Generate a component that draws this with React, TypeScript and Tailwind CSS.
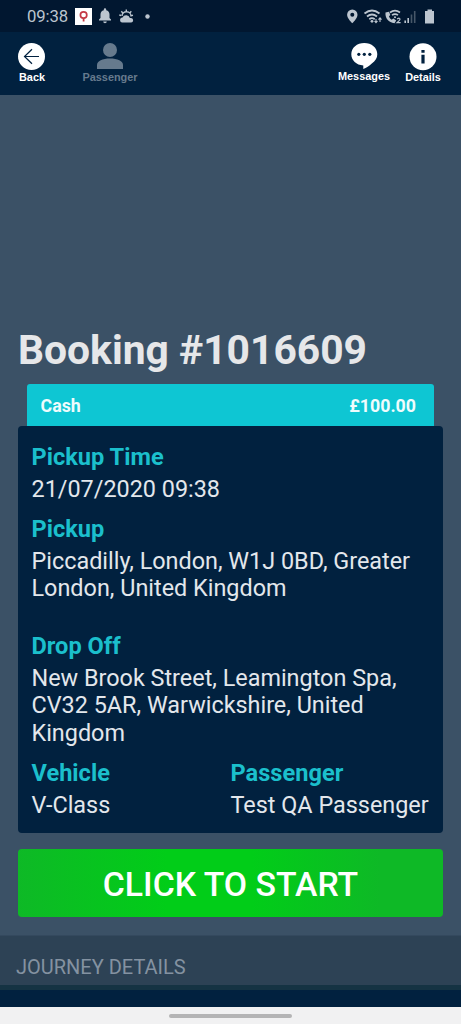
import React from "react";

function Field({ label, children, className = "" }: { label: string; children: React.ReactNode; className?: string }) {
  return (
    <div className={className}>
      <div className="h-[34px] text-[23.6px] font-bold leading-[30px] text-[#1bbfcc]">{label}</div>
      <div className="text-[23.4px] leading-[27.4px] text-[#e3e7ec]">{children}</div>
    </div>
  );
}

function StatusBar() {
  return (
    <div className="flex h-[32px] items-center bg-[#011730] pl-[27px] pr-[25px] text-[#bcc5cf]">
      <span className="w-[42px] whitespace-nowrap pt-[2px] text-[16.700px] leading-[32px] tracking-[-0.1px]">09:38</span>
      <svg className="ml-[6px]" width="80" height="24" viewBox="75 4 80 24" fill="#bcc5cf">
        <path d="M75 8h17v17H75z" fill="#fff" />
        <circle cx="83.600" cy="15" r="3.200" fill="none" stroke="#c43a45" strokeWidth="1.700" />
        <path d="M83.600 18v3.500" stroke="#c43a45" strokeWidth="1.800" />
        <path d="M99 20.500h12v-1l-1.500-1.500v-3.500a4.500 4.500 0 0 0-3.300-4.300v-.700a1.200 1.200 0 0 0-2.400 0v.700a4.500 4.500 0 0 0-3.300 4.300V18L99 19.500zM103.200 21.500h3.600a1.800 1.800 0 0 1-3.600 0z" />
        <path d="M121.800 22.500h9a2.200 2.200 0 0 0 .300-4.400h-1.200a4 4 0 0 0-7.400-.500a2.500 2.500 0 0 0-.700 4.900z" />
        <path d="M122 16a4.500 4.500 0 0 1 9 .500M126.300 9.500v1.800M121.300 11.300l1.300 1.500M131.300 11.300l-1.300 1.500M119.300 15l1.800.500M133 15.300l-1.500.300" fill="none" stroke="#bcc5cf" strokeWidth="1.400" />
        <circle cx="147.500" cy="16.500" r="2.200" />
      </svg>
      <svg className="ml-auto" width="90" height="24" viewBox="346 4 90 24" fill="none" stroke="#bcc5cf">
        <path d="M352.300 9.500a5.200 5.200 0 0 0-5.200 5.200c0 3.700 5.200 8.500 5.200 8.500s5.200-4.800 5.200-8.500a5.200 5.200 0 0 0-5.200-5.200zm0 3.200a2 2 0 1 1 0 4a2 2 0 0 1 0-4z" fill="#bcc5cf" fillRule="evenodd" stroke="none" />
        <path d="M364.500 13.500q7.500-6 15 0M367 16.500q5-4 10 0M369.300 19.200q2.700-2.200 5.400 0" strokeWidth="1.800" />
        <circle cx="372" cy="21.300" r="1.400" fill="#bcc5cf" stroke="none" />
        <path d="M376 19v3.500m-1.500-1.500l1.500 1.700l1.500-1.700M380 22v-4m-1.500 1.600l1.500-1.700l1.500 1.700" strokeWidth="1.100" />
        <path d="M385.500 12.500c-.500 6 3 10 9 10.800l1.700-2.700l-2.800-2l-1.700 1.200c-1.500-.800-2.300-2-2.700-3.500l1.300-1.300l-1.300-3.200z" fill="#bcc5cf" stroke="none" />
        <path d="M390 12.500q5-3.800 10 0M392 15.200q3-2.200 6 0" strokeWidth="1.600" />
        <circle cx="395" cy="17.300" r="1" fill="#bcc5cf" stroke="none" />
        <path d="M397 19q3-1.800 3 .3q0 1-3 3.300h3.600" strokeWidth="1.100" />
        <path d="M405.200 20.500v2.500M408.200 18v5" strokeWidth="1.600" />
        <path d="M411.500 14.500v8.500M414.700 11v12" stroke="#475768" strokeWidth="1.600" />
        <path d="M425 11h2.500v-1.500h4.500V11h2v12.500h-9z" fill="#bcc5cf" stroke="none" />
      </svg>
    </div>
  );
}

function Toolbar() {
  const label = "whitespace-nowrap font-['Liberation_Sans',sans-serif] text-[10.900px] font-bold leading-[12px]";
  return (
    <div className="flex h-[63px] justify-between bg-[#01213f] pl-[18px] pr-[20px] pt-[11px] text-white">
      <div className="flex">
        <div className="flex w-[28px] flex-col items-center">
          <svg width="28" height="28" viewBox="0 0 28 28">
            <circle cx="13.500" cy="13.500" r="13.500" fill="#fff" />
            <path d="M21 13.500H6.500M14 6.300L6.500 13.500L14 20.700" fill="none" stroke="#01213f" strokeWidth="1.200" />
          </svg>
          <span className={label}>Back</span>
        </div>
        <div className="ml-[36px] flex w-[56px] flex-col items-center text-[#667a8d]">
          <svg width="28" height="28" viewBox="0 0 28 28" fill="#667a8d">
            <circle cx="14" cy="7" r="7" />
            <path d="M1 26v-4c0-4 5.500-6.500 13-6.500s13 2.500 13 6.500v4z" />
          </svg>
          <span className={label}>Passenger</span>
        </div>
      </div>
      <div className="flex">
        <div className="flex w-[52px] flex-col items-center">
          <svg width="28" height="27" viewBox="0 0 28 27">
            <path d="M14.300 0C7 0 1.300 4.800 1.300 11.200c0 6 5 10.800 12 11.200v3.600c3-1.200 6-3.200 8.500-5.600c3.600-2.400 5.500-5.500 5.500-9.200C27.300 4.800 21.500 0 14.300 0z" fill="#fff" />
            <circle cx="8.800" cy="11.300" r="1.600" fill="#01213f" />
            <circle cx="14.300" cy="11.300" r="1.600" fill="#01213f" />
            <circle cx="19.800" cy="11.300" r="1.600" fill="#01213f" />
          </svg>
          <span className={label}>Messages</span>
        </div>
        <div className="ml-[15px] flex w-[36px] flex-col items-center">
          <svg width="28" height="28" viewBox="0 0 28 28">
            <circle cx="14" cy="13.700" r="13.500" fill="#fff" />
            <path d="M12.400 7h3.200v2.800h-3.200zM12.400 11.800h3.200v8.700h-3.200z" fill="#01213f" />
          </svg>
          <span className={label}>Details</span>
        </div>
      </div>
    </div>
  );
}

export default function App() {
  return (
    <div className="flex h-[1024px] w-[461px] flex-col overflow-hidden bg-[#3b5166] font-['Roboto',sans-serif]">
      <StatusBar />
      <Toolbar />
      <main className="flex flex-1 flex-col px-[18px] pt-[231px]">
        <h1 className="h-[58px] whitespace-nowrap text-[40.800px] font-bold leading-[48px] text-[#e6e7e9]">Booking #1016609</h1>
        <div className="mx-[9px] flex h-[42px] items-center justify-between rounded-t-[3px] bg-[#0ec6d3] pl-[13.500px] pr-[18px] pt-[2px] text-[17.800px] font-bold text-[#effcfd]">
          <span>Cash</span>
          <span>£100.00</span>
        </div>
        <section className="h-[407px] rounded-[4px] bg-[#01213f] px-[13.500px] pt-[16px]">
          <Field label="Pickup Time" className="h-[72px]">21/07/2020 09:38</Field>
          <Field label="Pickup" className="h-[117px]">
            Piccadilly, London, W1J 0BD, Greater<br />London, United Kingdom
          </Field>
          <Field label="Drop Off" className="h-[127px]">
            New Brook Street, Leamington Spa,<br />CV32 5AR, Warwickshire, United<br />Kingdom
          </Field>
          <div className="flex whitespace-nowrap">
            <Field label="Vehicle" className="w-[199px]">V-Class</Field>
            <Field label="Passenger">Test QA Passenger</Field>
          </div>
        </section>
        <button className="mt-[16px] h-[68px] rounded-[4px] bg-[linear-gradient(90deg,#0eb926_0%,#01cd18_35%,#01cd18_55%,#0eb926_85%)] pt-[4px] text-[33.800px] font-medium text-white">
          CLICK TO START
        </button>
      </main>
      <div className="h-[50px] border-t border-[#34495e] bg-[#2d4255] pl-[16px] pt-[7px] text-[20px] leading-[48px] text-[#8492a1]">JOURNEY DETAILS</div>
      <div className="h-[5px] bg-[#153343]" />
      <div className="h-[17px] bg-[#01213f]" />
      <div className="flex h-[17px] justify-center bg-[#f1f1f2] pt-[7px]">
        <div className="h-[4px] w-[123px] rounded-full bg-[#b4b4b5]" />
      </div>
    </div>
  );
}
